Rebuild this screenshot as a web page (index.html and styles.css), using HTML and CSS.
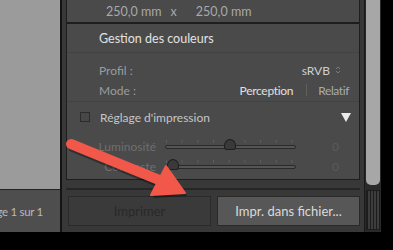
FILE: index.html
```html
<!DOCTYPE html>
<html lang="fr">
<head>
    <meta charset="UTF-8">
    <title>Imprimer</title>
    <link rel="stylesheet" href="styles.css">
</head>
<body>

    <div class="window">
        <div class="preview">
            <div class="canvas"></div>
            <div class="page-bar">Page 1 sur 1</div>
        </div>

        <div class="panel">
            <div class="box size-box">
                <span>250,0 mm</span>
                <span class="times">x</span>
                <span>250,0 mm</span>
            </div>

            <div class="box color-box">
                <div class="section-title">Gestion des couleurs</div>
                <div class="rule"></div>

                <div class="field">
                    <span class="label">Profil :</span>
                    <span class="value">sRVB</span>
                    <svg class="updown" width="6" height="10" viewBox="0 0 6 10">
                        <path d="M1 4 L3 2 L5 4 M1 6 L3 8 L5 6" fill="none" stroke="#7a7a7a" stroke-width="1"/>
                    </svg>
                </div>
                <div class="field">
                    <span class="label">Mode :</span>
                    <span class="mode-on">Perception</span>
                    <span class="pipe"></span>
                    <span class="mode-off">Relatif</span>
                </div>
                <div class="rule"></div>

                <div class="check-row">
                    <span class="checkbox"></span>
                    <span class="check-label">Réglage d'impression</span>
                    <svg class="disclosure" width="10" height="9" viewBox="0 0 10 9">
                        <path d="M0 0 H10 L5 9 Z" fill="#ececec"/>
                    </svg>
                </div>

                <div class="sliders">
                    <div class="slider-row">
                        <span class="slider-label">Luminosité</span>
                        <div class="track">
                            <div class="ticks"></div>
                            <div class="knob" style="left: 58px"></div>
                        </div>
                        <span class="slider-value">0</span>
                    </div>
                    <div class="slider-row">
                        <span class="slider-label">Contraste</span>
                        <div class="track">
                            <div class="ticks"></div>
                            <div class="knob" style="left: 1px"></div>
                        </div>
                        <span class="slider-value">0</span>
                    </div>
                </div>
            </div>

            <div class="actions">
                <button class="btn btn-disabled">Imprimer</button>
                <button class="btn">Impr. dans fichier...</button>
            </div>
        </div>

        <div class="scrollbar">
            <div class="thumb"></div>
            <div class="grip"></div>
        </div>
    </div>

    <!-- annotation arrow drawn over the screenshot -->
    <svg class="arrow" width="393" height="250" viewBox="0 0 393 250">
        <g fill="#000" opacity="0.35" transform="translate(2 3)">
            <line x1="71" y1="144" x2="164" y2="182" stroke="#000" stroke-width="10" stroke-linecap="round"/>
            <path d="M185 193 L166 166 L151 195 Z"/>
        </g>
        <g fill="#f1584a">
            <line x1="71" y1="144" x2="164" y2="182" stroke="#f1584a" stroke-width="10" stroke-linecap="round"/>
            <path d="M185 193 L166 166 L151 195 Z" stroke="#f1584a" stroke-width="2" stroke-linejoin="round"/>
        </g>
    </svg>

</body>
</html>
```

FILE: styles.css
```css
body {
    margin: 0;
    width: 393px;
    height: 250px;
    overflow: hidden;
    background-color: #000;
    font-family: Lato, "Liberation Sans", sans-serif;
    position: relative;
}

.window {
    display: flex;
    height: 232px;
}

.preview {
    width: 60px;
    display: flex;
    flex-direction: column;
    border-right: 2px solid #141414;
}

.canvas {
    height: 189px;
    background-color: #9b9b9b;
    border-bottom: 1px solid #232323;
}

.page-bar {
    flex: 1;
    background-color: #4e4e4e;
    color: #b9b9b9;
    font-size: 11.5px;
    letter-spacing: -0.3px;
    display: flex;
    align-items: center;
    justify-content: flex-end;
    padding-right: 17px;
    white-space: nowrap;
    overflow: hidden;
}

.panel {
    width: 294px;
    padding: 0 4px;
    background-color: #383838;
    display: flex;
    flex-direction: column;
}

.box {
    background-color: #4a4a4a;
    border: 1px solid #1e1e1e;
}

.size-box {
    height: 22px;
    border-top: none;
    display: flex;
    align-items: center;
    padding-left: 39px;
    color: #a9a9a9;
    font-size: 12.5px;
}

.times {
    margin: 0 19px 0 9px;
}

.color-box {
    height: 155px;
}

.section-title {
    height: 28px;
    padding-left: 32px;
    display: flex;
    align-items: center;
    color: #e2e2e2;
    font-size: 12.5px;
}

.rule {
    height: 1px;
    background-color: #424242;
}

.field {
    height: 20px;
    padding: 0 17px 0 32px;
    display: flex;
    align-items: center;
    font-size: 12px;
    color: #cfcfcf;
}

.rule + .field {
    margin-top: 7px;
}

.label {
    color: #9c9c9c;
    margin-right: auto;
}

.updown {
    margin-left: 5px;
    margin-right: 1px;
}

.mode-on {
    color: #e0e0e0;
    letter-spacing: -0.3px;
}

.pipe {
    width: 1px;
    height: 12px;
    background-color: #5e5e5e;
    margin: 0 11px 0 13px;
}

.mode-off {
    color: #ababab;
    letter-spacing: -0.4px;
    margin-right: -7px;
}

.field + .rule {
    margin-top: 1px;
}

.check-row {
    height: 30px;
    display: flex;
    align-items: center;
    padding-left: 13px;
    padding-right: 8px;
    font-size: 12px;
}

.checkbox {
    width: 8px;
    height: 8px;
    border: 1px solid #2c2c2c;
    background-color: #474747;
    margin-right: 10px;
}

.check-label {
    color: #c6c6c6;
    margin-right: auto;
}

.sliders {
    padding-top: 4px;
}

.slider-row {
    height: 20px;
    display: flex;
    align-items: center;
    font-size: 12px;
}

.slider-label {
    width: 89px;
    text-align: right;
    color: #6e6e6e;
    padding-right: 9px;
}

.track {
    position: relative;
    width: 129px;
    height: 2px;
    border: 1px solid #2a2a2a;
    background-color: #555;
    border-radius: 2px;
    margin-top: 2px;
}

.ticks {
    position: absolute;
    left: 0;
    right: 0;
    top: -6px;
    height: 3px;
    background-image: linear-gradient(to right, #5e5e5e 1px, transparent 1px);
    background-size: 15.7px 3px;
}

.knob {
    position: absolute;
    top: -7px;
    width: 10px;
    height: 9px;
    background-color: #3a3a3a;
    border: 1px solid #1f1f1f;
    border-radius: 50% 50% 3px 3px / 60% 60% 3px 3px;
}

.slider-value {
    margin-left: auto;
    margin-right: 20px;
    color: #5b5b5b;
}

.actions {
    flex: 1;
    margin-top: 8px;
    border-top: 2px solid #262626;
    padding: 6px 0 6px 2px;
    display: flex;
    gap: 6px;
}

.btn {
    flex: 1;
    background-color: #575757;
    border: 1px solid #2a2a2a;
    color: #dadada;
    font-family: Lato, "Liberation Sans", sans-serif;
    font-size: 13px;
    padding: 0;
}

.btn-disabled {
    background-color: #3a3a3a;
    color: #292929;
}

.scrollbar {
    width: 14px;
    background-color: #2a2a2a;
    border-left: 1px solid #1a1a1a;
    display: flex;
    flex-direction: column;
    padding: 0 1px;
}

.thumb {
    height: 185px;
    background-color: #a7a7a7;
    border-radius: 0 0 5px 5px;
}

.grip {
    flex: 1;
    margin-top: 5px;
    margin-bottom: 2px;
    background-image: linear-gradient(to right, #1c1c1c 1px, #3d3d3d 1px);
    background-size: 3px 100%;
    border: 1px solid #1c1c1c;
}

.arrow {
    position: absolute;
    left: 0;
    top: 0;
    pointer-events: none;
}
```
